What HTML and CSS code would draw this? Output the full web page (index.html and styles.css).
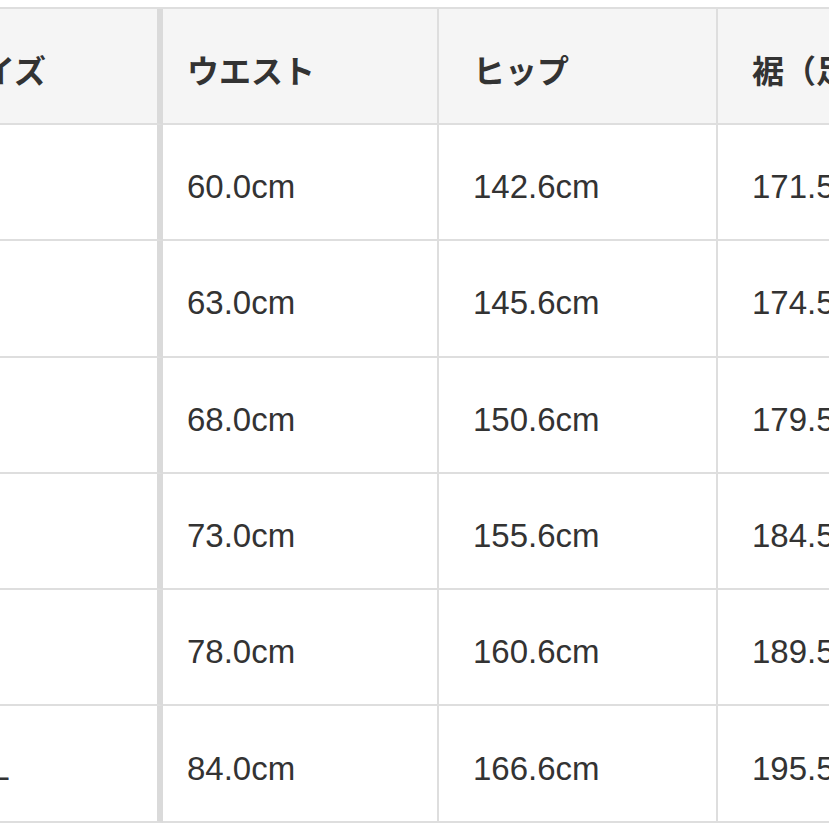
FILE: index.html
```html
<!DOCTYPE html>
<html lang="ja">
<head>
<meta charset="utf-8">
<title>サイズ表</title>
<link rel="stylesheet" href="styles.css">
</head>
<body>
<div class="viewport">
  <table class="size-table">
    <colgroup>
      <col class="c-size">
      <col class="c-waist">
      <col class="c-hip">
      <col class="c-hem">
      <col class="c-extra">
    </colgroup>
    <thead>
      <tr>
        <th class="first">サイズ</th>
        <th class="second">ウエスト</th>
        <th>ヒップ</th>
        <th>裾（足首）</th>
        <th>股下</th>
      </tr>
    </thead>
    <tbody>
      <tr><td class="first">XS</td><td class="second">60.0cm</td><td>142.6cm</td><td>171.5cm</td><td>70.0cm</td></tr>
      <tr><td class="first">S</td><td class="second">63.0cm</td><td>145.6cm</td><td>174.5cm</td><td>71.0cm</td></tr>
      <tr><td class="first">M</td><td class="second">68.0cm</td><td>150.6cm</td><td>179.5cm</td><td>72.0cm</td></tr>
      <tr><td class="first">L</td><td class="second">73.0cm</td><td>155.6cm</td><td>184.5cm</td><td>73.0cm</td></tr>
      <tr><td class="first">XL</td><td class="second">78.0cm</td><td>160.6cm</td><td>189.5cm</td><td>74.0cm</td></tr>
      <tr><td class="first">3XL</td><td class="second">84.0cm</td><td>166.6cm</td><td>195.5cm</td><td>75.0cm</td></tr>
    </tbody>
  </table>
</div>
</body>
</html>
```

FILE: styles.css
```css
html, body {
  margin: 0;
  padding: 0;
  background: #ffffff;
}

.viewport {
  width: 829px;
  height: 829px;
  overflow: hidden;
  padding-top: 7px;
  box-sizing: border-box;
}

.size-table {
  margin-left: -77px;
  border-collapse: separate;
  border-spacing: 0;
  table-layout: fixed;
  width: 1240px;
  border-top: 2px solid #dedede;
  color: #333333;
}

.c-size { width: 240px; }
.c-waist { width: 276px; }
.c-hip { width: 279px; }
.c-hem { width: 280px; }
.c-extra { width: 165px; }

.size-table th,
.size-table td {
  text-align: left;
  vertical-align: middle;
  padding: 0 0 0 34px;
  border-right: 2px solid #dedede;
  border-bottom: 2px solid #dedede;
  white-space: nowrap;
  overflow: hidden;
  box-sizing: border-box;
}

.size-table th {
  height: 116px;
  padding-top: 5px;
  background: #f5f5f5;
  font-family: "Noto Sans CJK JP", "Noto Sans", sans-serif;
  font-weight: 700;
  font-size: 32px;
}

.size-table td {
  height: 116.3px;
  padding-top: 10px;
  background: #ffffff;
  font-family: "Liberation Sans", Arial, sans-serif;
  font-size: 33px;
  font-weight: 400;
}

.size-table .first {
  padding-left: 28px;
  border-right: 6px solid #dadada;
}

.size-table .second {
  padding-left: 24px;
}
```
